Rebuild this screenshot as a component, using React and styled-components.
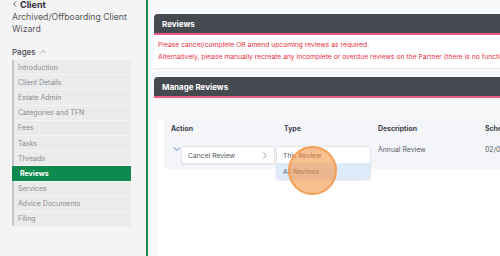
import React from "react";
import styled, { createGlobalStyle } from "styled-components";

const Global = createGlobalStyle`
  html, body { margin: 0; padding: 0; background: #ffffff; }
  body { font-family: Inter, "Noto Sans", sans-serif; }
  #root { width: 500px; height: 256px; overflow: hidden; }
`;

const Page = styled.div`
  display: flex;
  width: 500px;
  height: 256px;
  overflow: hidden;
`;

const Sidebar = styled.aside`
  width: 134px;
  flex: none;
  background: #f4f4f4;
  border-right: 2px solid #15884c;
  padding-left: 12px;
  overflow: hidden;
`;

const BackRow = styled.div`
  display: flex;
  align-items: center;
  gap: 2px;
  margin-top: -3px;
  height: 14px;
  font-size: 9px;
  font-weight: 700;
  color: #2f3237;
`;

const Subtitle = styled.div`
  font-size: 8.7px;
  line-height: 12px;
  color: #55585d;
  white-space: nowrap;
`;

const PagesHead = styled.div`
  margin-top: 11px;
  display: flex;
  align-items: center;
  gap: 4px;
  font-size: 8px;
  font-weight: 500;
  color: #45484d;
  height: 12px;
`;

const NavList = styled.ul`
  list-style: none;
  margin: 2px 0 0;
  padding: 0;
  width: 117px;
  border-left: 2px solid #c6c6c6;
`;

const NavItem = styled.li`
  height: 14.2px;
  margin-bottom: 1px;
  display: flex;
  align-items: center;
  padding-left: ${(p) => (p.$active ? "8px" : "4px")};
  margin-left: ${(p) => (p.$active ? "-2px" : "0")};
  background: ${(p) => (p.$active ? "#0f8a4f" : "#ebebeb")};
  color: ${(p) => (p.$active ? "#ffffff" : "#8a8c90")};
  font-size: 7px;
  font-weight: ${(p) => (p.$active ? 700 : 400)};
  white-space: nowrap;
`;

const Main = styled.main`
  flex: 1;
  background: #f7f8fa;
  padding-left: 6px;
  padding-top: 14px;
  overflow: hidden;
  display: flex;
  flex-direction: column;
`;

const CardHeader = styled.div`
  height: 19px;
  background: #454a51;
  border-bottom: 2px solid #ef5b7e;
  border-top-left-radius: 4px;
  display: flex;
  align-items: center;
  padding-left: 8px;
  color: #ffffff;
  font-size: 8px;
  font-weight: 700;
`;

const Notice = styled.div`
  background: #ffffff;
  padding: 4px 0 6px 4px;
  font-size: 6.75px;
  line-height: 11.5px;
  color: #e8313f;
  white-space: nowrap;
  border-bottom: 1px solid #ececec;
`;

const Card = styled.section`
  margin-bottom: ${(p) => p.$gap || 0}px;
`;

const ManageBody = styled.div`
  padding-top: 21px;
  padding-left: 4px;
`;

const Panel = styled.div`
  background: #ffffff;
  padding-left: 6px;
  height: 140px;
`;

const Table = styled.div`
  background: #f4f5f9;
  position: relative;
`;

const Row = styled.div`
  display: grid;
  grid-template-columns: 113px 94px 107px 1fr;
  padding-left: 7px;
  height: ${(p) => p.$h}px;
  align-items: ${(p) => (p.$top ? "start" : "center")};
  padding-top: ${(p) => (p.$top ? "8px" : "0")};
  box-sizing: border-box;
  position: relative;
  font-size: 6.9px;
  white-space: nowrap;
  color: ${(p) => (p.$head ? "#3d4148" : "#5a5d63")};
  font-weight: ${(p) => (p.$head ? 700 : 400)};
`;

const Toggle = styled.svg`
  display: block;
  margin-left: 2px;
  margin-top: 1px;
`;

const Menu = styled.div`
  position: absolute;
  top: 9px;
  left: 17px;
  width: 94px;
  background: #ffffff;
  border: 1px solid #e2e4e9;
  border-radius: 3px;
  box-shadow: 0 1px 2px rgba(0, 0, 0, 0.06);
  box-sizing: border-box;
`;

const MenuItem = styled.div`
  height: 16px;
  display: flex;
  align-items: center;
  justify-content: space-between;
  padding: 0 6px 0 6px;
  font-size: 6.8px;
  color: #55585e;
  font-weight: 400;
  background: ${(p) => (p.$hl ? "#dcecfb" : "transparent")};
`;

const SubMenu = styled(Menu)`
  left: 112px;
  width: 95px;
  overflow: hidden;
`;

const Pointer = styled.div`
  position: absolute;
  left: 124px;
  top: 9px;
  width: 45px;
  height: 45px;
  border-radius: 50%;
  background: rgba(244, 148, 70, 0.6);
  border: 2px solid #f59f56;
  pointer-events: none;
`;

const pages = [
  "Introduction",
  "Client Details",
  "Estate Admin",
  "Categories and TFN",
  "Fees",
  "Tasks",
  "Threads",
  "Reviews",
  "Services",
  "Advice Documents",
  "Filing",
];

function Chev({ dir = "down", size = 6, color = "#666", w = 1 }) {
  const paths = {
    down: "M1 2 L4 5 L7 2",
    up: "M1 5 L4 2 L7 5",
    left: "M5 1 L2 4 L5 7",
    right: "M3 1 L6 4 L3 7",
  };
  return (
    <svg width={size} height={size} viewBox="0 0 8 8" style={{ display: "block" }}>
      <path d={paths[dir]} fill="none" stroke={color} strokeWidth={w} strokeLinecap="round" strokeLinejoin="round" />
    </svg>
  );
}

export default function App() {
  return (
    <Page>
      <Global />
      <Sidebar>
        <BackRow>
          <Chev dir="left" size={6} color="#444" w={1.2} />
          Client
        </BackRow>
        <Subtitle>
          Archived/Offboarding Client
          <br />
          Wizard
        </Subtitle>
        <PagesHead>
          Pages <Chev dir="up" size={6} color="#888" w={1} />
        </PagesHead>
        <NavList>
          {pages.map((p) => (
            <NavItem key={p} $active={p === "Reviews"}>
              {p}
            </NavItem>
          ))}
        </NavList>
      </Sidebar>
      <Main>
        <Card $gap={8}>
          <CardHeader>Reviews</CardHeader>
          <Notice>
            Please cancel/complete OR amend upcoming reviews as required.
            <br />
            Alternatively, please manually recreate any incomplete or overdue
            reviews on the Partner (there is no function to do this automatically).
          </Notice>
        </Card>
        <Card>
          <CardHeader>Manage Reviews</CardHeader>
          <ManageBody>
            <Panel>
              <Table>
                <Row $head $h={18}>
                  <span>Action</span>
                  <span>Type</span>
                  <span>Description</span>
                  <span>Scheduled</span>
                </Row>
                <Row $h={32} $top>
                  <span>
                    <Toggle width="8" height="6" viewBox="0 0 8 6">
                      <path d="M1 1.5 L4 4.5 L7 1.5" fill="none" stroke="#4a89d0" strokeWidth="1" />
                    </Toggle>
                  </span>
                  <span></span>
                  <span>Annual Review</span>
                  <span>02/03/2025</span>
                  <Menu>
                    <MenuItem>
                      Cancel Review <Chev dir="right" size={7} color="#777" w={0.9} />
                    </MenuItem>
                  </Menu>
                  <SubMenu>
                    <MenuItem>This Review</MenuItem>
                    <MenuItem $hl>All Reviews</MenuItem>
                  </SubMenu>
                  <Pointer />
                </Row>
              </Table>
            </Panel>
          </ManageBody>
        </Card>
      </Main>
    </Page>
  );
}
